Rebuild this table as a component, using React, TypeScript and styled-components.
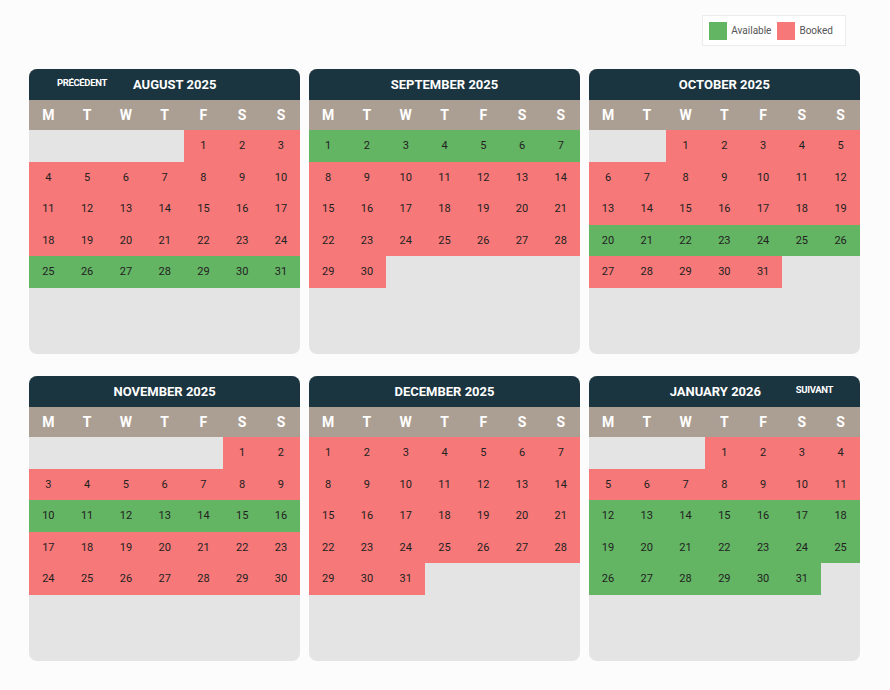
import React from 'react';
import styled, { createGlobalStyle } from 'styled-components';

const GlobalStyle = createGlobalStyle`
  html, body {
    margin: 0;
    padding: 0;
    background: #fcfcfc;
    font-family: Roboto, "Liberation Sans", Arial, sans-serif;
  }
`;

const Page = styled.div`
  width: 890px;
  height: 690px;
  box-sizing: border-box;
  padding: 15px 30px 0 29px;
`;

const LegendBar = styled.div`
  display: flex;
  justify-content: flex-end;
  padding-right: 14px;
  margin-bottom: 23px;
`;

const Legend = styled.div`
  display: flex;
  align-items: center;
  gap: 6px;
  height: 31px;
  box-sizing: border-box;
  padding: 0 12px 0 6px;
  background: #fff;
  border: 1px solid #ececec;
`;

const LegendItem = styled.div`
  display: flex;
  align-items: center;
  gap: 4px;
  font-size: 10px;
  color: #555;
`;

const Swatch = styled.span<{ $color: string }>`
  width: 18px;
  height: 18px;
  background: ${({ $color }) => $color};
`;

const Grid = styled.div`
  display: grid;
  grid-template-columns: repeat(3, 1fr);
  column-gap: 8.5px;
  row-gap: 22px;
`;

const Card = styled.div`
  height: 285px;
  border-radius: 8px;
  overflow: hidden;
  background: #e4e4e4;
  display: flex;
  flex-direction: column;
`;

const Header = styled.div`
  position: relative;
  height: 31px;
  background: #1b3540;
  display: flex;
  align-items: center;
  justify-content: center;
`;

const Title = styled.h3<{ $shift: number }>`
  margin: 0;
  font-size: 13px;
  font-weight: 700;
  color: #fff;
  transform: translateX(${({ $shift }) => $shift}px);
`;

const NavButton = styled.button<{ $side: 'left' | 'right' }>`
  position: absolute;
  top: 8px;
  ${({ $side }) => ($side === 'left' ? 'left: 28px;' : 'right: 27px;')}
  background: none;
  border: none;
  padding: 0;
  color: #fff;
  font-family: inherit;
  font-size: 9.5px;
  font-weight: 700;
  letter-spacing: -0.35px;
  cursor: pointer;
`;

const Week = styled.div`
  display: grid;
  grid-template-columns: repeat(7, 1fr);
`;

const DayNames = styled(Week)`
  height: 30px;
  background: #ab9e93;
  align-items: center;
`;

const DayName = styled.span`
  text-align: center;
  color: #fff;
  font-size: 14px;
  font-weight: 700;
`;

const Cell = styled.div<{ $state: 'free' | 'booked' | 'empty' }>`
  height: 31.5px;
  display: flex;
  align-items: center;
  justify-content: center;
  font-size: 11px;
  color: #222;
  background: ${({ $state }) =>
    $state === 'free' ? '#63b463' : $state === 'booked' ? '#f77878' : 'transparent'};
`;

interface Month {
  name: string;
  start: number; // 0 = Monday
  days: number;
  free: [number, number][];
  nav?: 'prev' | 'next';
}

const months: Month[] = [
  { name: 'AUGUST 2025', start: 4, days: 31, free: [[25, 31]], nav: 'prev' },
  { name: 'SEPTEMBER 2025', start: 0, days: 30, free: [[1, 7]] },
  { name: 'OCTOBER 2025', start: 2, days: 31, free: [[20, 26]] },
  { name: 'NOVEMBER 2025', start: 5, days: 30, free: [[10, 16]] },
  { name: 'DECEMBER 2025', start: 0, days: 31, free: [] },
  { name: 'JANUARY 2026', start: 3, days: 31, free: [[12, 31]], nav: 'next' },
];

const dayLabels = ['M', 'T', 'W', 'T', 'F', 'S', 'S'];

const Calendar: React.FC<{ month: Month }> = ({ month }) => {
  const isFree = (d: number) => month.free.some(([a, b]) => d >= a && d <= b);
  const cells: React.ReactNode[] = [];
  for (let i = 0; i < month.start; i++) {
    cells.push(<Cell key={`e${i}`} $state="empty" />);
  }
  for (let d = 1; d <= month.days; d++) {
    cells.push(
      <Cell key={d} $state={isFree(d) ? 'free' : 'booked'}>
        {d}
      </Cell>
    );
  }
  const shift = month.nav === 'prev' ? 10 : month.nav === 'next' ? -9 : 0;

  return (
    <Card>
      <Header>
        {month.nav === 'prev' && <NavButton $side="left">PRÉCÉDENT</NavButton>}
        <Title $shift={shift}>{month.name}</Title>
        {month.nav === 'next' && <NavButton $side="right">SUIVANT</NavButton>}
      </Header>
      <DayNames>
        {dayLabels.map((l, i) => (
          <DayName key={i}>{l}</DayName>
        ))}
      </DayNames>
      <Week>{cells}</Week>
    </Card>
  );
};

export default function App() {
  return (
    <Page>
      <GlobalStyle />
      <LegendBar>
        <Legend>
          <LegendItem>
            <Swatch $color="#63b463" />
            Available
          </LegendItem>
          <LegendItem>
            <Swatch $color="#f77878" />
            Booked
          </LegendItem>
        </Legend>
      </LegendBar>
      <Grid>
        {months.map(m => (
          <Calendar key={m.name} month={m} />
        ))}
      </Grid>
    </Page>
  );
}
